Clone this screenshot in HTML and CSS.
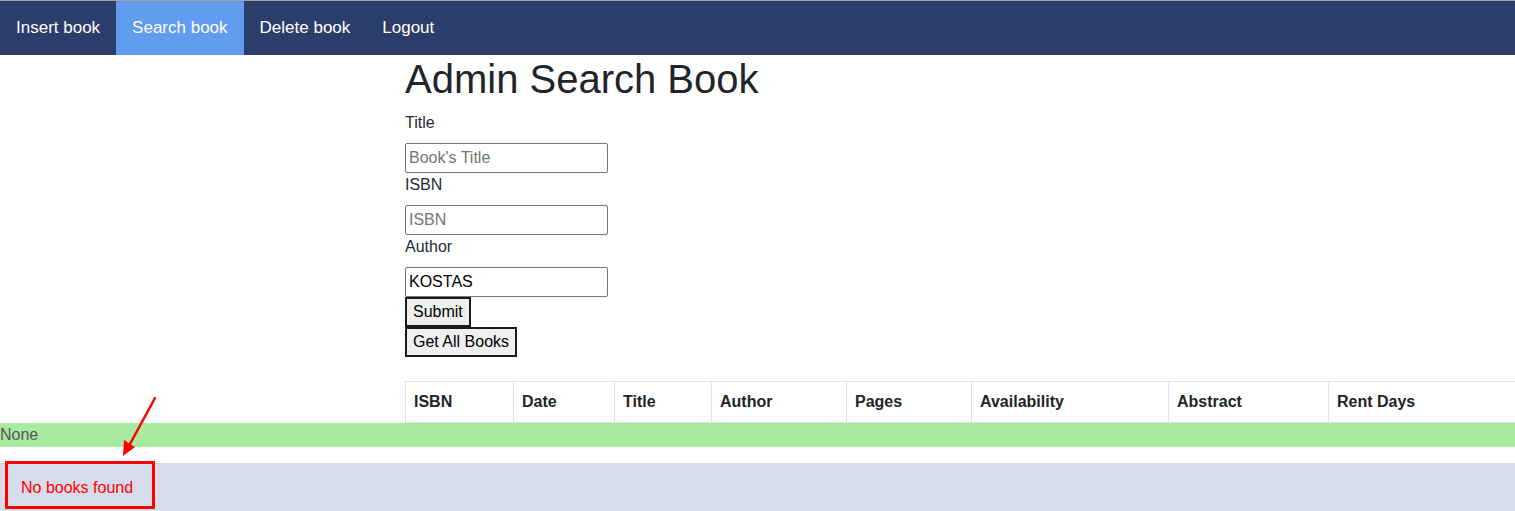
FILE: index.html
```html
<!DOCTYPE html>
<html lang="en">
<head>
<meta charset="utf-8">
<title>Admin Search Book</title>
<link rel="stylesheet" href="styles.css">
</head>
<body>
<nav class="topnav">
  <a href="#" class="nav-link">Insert book</a>
  <a href="#" class="nav-link active">Search book</a>
  <a href="#" class="nav-link">Delete book</a>
  <a href="#" class="nav-link">Logout</a>
</nav>
<main class="content">
  <h1 class="page-title">Admin Search Book</h1>
  <form class="search-form">
    <label class="field-label" for="title">Title</label>
    <input class="field-input" id="title" type="text" placeholder="Book's Title">
    <label class="field-label" for="isbn">ISBN</label>
    <input class="field-input" id="isbn" type="text" placeholder="ISBN">
    <label class="field-label" for="author">Author</label>
    <input class="field-input" id="author" type="text" value="KOSTAS">
    <button class="btn" type="button">Submit</button>
    <button class="btn" type="button">Get All Books</button>
  </form>
  <table class="books">
    <thead>
      <tr>
        <th class="c-isbn">ISBN</th>
        <th class="c-date">Date</th>
        <th class="c-title">Title</th>
        <th class="c-author">Author</th>
        <th class="c-pages">Pages</th>
        <th class="c-avail">Availability</th>
        <th class="c-abstract">Abstract</th>
        <th class="c-rent">Rent Days</th>
      </tr>
    </thead>
  </table>
</main>
<div class="status-bar">None</div>
<section class="message-area">
  <p class="message">No books found</p>
</section>
<div class="annot-box"></div>
<svg class="annot-arrow" width="60" height="70" viewBox="100 395 60 70" xmlns="http://www.w3.org/2000/svg">
  <line x1="155" y1="398" x2="130" y2="444" stroke="#ff0000" stroke-width="2.5" stroke-linecap="round"/>
  <polygon points="123,456 135,447 124,440" fill="#ff0000"/>
</svg>
</body>
</html>
```
FILE: styles.css
```css
html, body {
  margin: 0;
  padding: 0;
}
body {
  font-family: "Liberation Sans", Arial, sans-serif;
  font-size: 16px;
  line-height: 24px;
  color: #212529;
  background: #fff;
  position: relative;
  min-height: 511px;
}
.topnav {
  display: flex;
  height: 54px;
  background: #2b3d6b;
  border-top: 1px solid #a3a3a3;
}
.nav-link {
  display: block;
  padding: 0 16px;
  line-height: 54px;
  font-size: 17px;
  color: #fff;
  text-decoration: none;
}
.nav-link.active {
  background: #629cee;
}
.content {
  padding-left: 405px;
}
.page-title {
  margin: 0 0 8px;
  font-size: 40px;
  line-height: 48px;
  font-weight: 400;
  color: #212529;
}
.search-form {
  display: flex;
  flex-direction: column;
  align-items: flex-start;
}
.field-label {
  display: block;
  line-height: 24px;
  margin-bottom: 8px;
  color: #1c2a3a;
}
.field-input {
  box-sizing: border-box;
  width: 203px;
  height: 30px;
  padding: 0 3px;
  border: 1px solid #767676;
  border-radius: 2px;
  font-family: inherit;
  font-size: 16px;
  color: #000;
  background: #fff;
  margin: 0;
}
.field-input::placeholder {
  color: #757575;
}
.btn {
  box-sizing: border-box;
  height: 30px;
  margin: 0;
  padding: 0 6px;
  border: 2px solid #1b1b1b;
  background: #efefef;
  font-family: inherit;
  font-size: 16px;
  color: #000;
}
.books {
  margin-top: 24px;
  width: 1110px;
  border-collapse: collapse;
  table-layout: fixed;
}
.books th {
  height: 41px;
  box-sizing: border-box;
  padding: 0 8px;
  text-align: left;
  font-weight: 700;
  border: 1px solid #dee2e6;
  vertical-align: middle;
}
.c-isbn { width: 108px; }
.c-date { width: 101px; }
.c-title { width: 97px; }
.c-author { width: 135px; }
.c-pages { width: 125px; }
.c-avail { width: 197px; }
.c-abstract { width: 160px; }
.c-rent { width: 187px; }
.status-bar {
  height: 24px;
  line-height: 24px;
  background: #a8eaa0;
  color: #555;
  margin-bottom: 16px;
}
.message-area {
  background: #d6dce9;
  padding: 13px 21px 11px;
  min-height: 24px;
}
.message {
  margin: 0;
  color: #ff0000;
}
.annot-box {
  position: absolute;
  left: 5px;
  top: 461px;
  width: 150px;
  height: 48px;
  box-sizing: border-box;
  border: 3px solid #ff0000;
}
.annot-arrow {
  position: absolute;
  left: 100px;
  top: 395px;
}
```
